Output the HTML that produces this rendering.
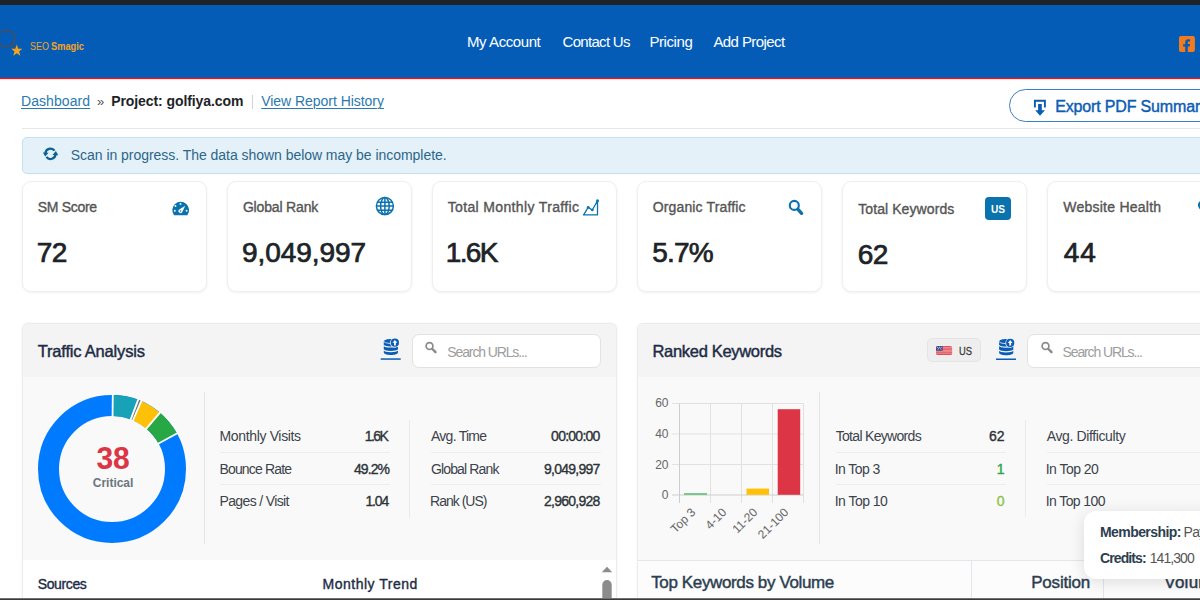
<!DOCTYPE html>
<html lang="en">
<head>
<meta charset="utf-8">
<title>SEOSmagic – Project: golfiya.com</title>
<style>
html,body{margin:0;padding:0;}
body{width:1200px;height:600px;overflow:hidden;position:relative;background:#fff;font-family:"Liberation Sans",sans-serif;}
.a{position:absolute;box-sizing:border-box;}
.t{position:absolute;white-space:pre;font-family:"Liberation Sans",sans-serif;}
svg{position:absolute;overflow:visible;}
.card{position:absolute;box-sizing:border-box;top:181px;width:185px;height:111px;background:#fff;border:1px solid #efefef;border-radius:9px;box-shadow:0 1px 3px rgba(0,0,0,.06);}
.panel{position:absolute;box-sizing:border-box;top:323px;height:300px;background:#f9f9f9;border:1px solid #ececec;border-radius:6px;overflow:hidden;box-shadow:0 0 3px rgba(0,0,0,.05);}
.phead{position:absolute;left:0;right:0;top:0;height:53px;background:#f4f4f4;}
.inp{position:absolute;box-sizing:border-box;height:34.5px;top:333.5px;background:#fff;border:1px solid #e2e2e2;border-radius:7px;}
.vd{position:absolute;width:1px;background:#e4e4e4;}
.hd{position:absolute;height:1px;background:#eeeeee;}
</style>
</head>
<body>
<!-- admin bar + header -->
<div class="a" style="left:0;top:0;width:1200px;height:5px;background:#1d2327;"></div>
<div class="a" style="left:0;top:5px;width:1200px;height:72px;background:#045cb7;"></div>
<div class="a" style="left:0;top:77px;width:1200px;height:1px;background:#3f4a94;"></div>
<div class="a" style="left:0;top:78px;width:1200px;height:1px;background:#ee1212;"></div>
<div class="a" style="left:0;top:79px;width:1200px;height:1px;background:#fde3e3;"></div>
<!-- logo -->
<svg width="40" height="40" style="left:-6px;top:26px;" viewBox="-6 26 40 40">
  <circle cx="6.4" cy="38.6" r="8.3" fill="none" stroke="#3f5068" stroke-width="1.7"/>
  <path d="M12.2 44.6 L15 47.6" stroke="#3f5068" stroke-width="2" stroke-linecap="round"/>
  <polygon fill="#f5a31f" transform="translate(16.8 50.5) scale(1.04 1.09) translate(-16.8 -50.6)" points="16.8,45.2 18.2,49.0 22.2,49.1 19.0,51.6 20.2,55.5 16.8,53.2 13.4,55.5 14.6,51.6 11.4,49.1 15.4,49.0"/>
</svg>
<!-- facebook -->
<svg width="16" height="17" style="left:1178.8px;top:35.7px;" viewBox="0 0 16 17">
  <rect x="0" y="0" width="15.9" height="16.1" rx="2" fill="#f27b20"/>
  <path transform="translate(-2.1,0.5)" d="M10.9 15.6V9.9h1.9l.35-2.3H10.9V6.2c0-.7.3-1.2 1.3-1.2h1V3c-.4-.06-1.1-.14-1.9-.14-1.9 0-3 1.1-3 3.1v1.7H6.2v2.3h2.1v5.7z" fill="#045cb7"/>
</svg>
<!-- breadcrumb separator bar -->
<div class="a" style="left:252px;top:95px;width:1px;height:14px;background:#d2d2d2;"></div>
<!-- export button -->
<div class="a" style="left:1008.5px;top:89.3px;width:260px;height:32.6px;border:1.3px solid #3f7cc4;border-radius:17px;background:#fff;"></div>
<svg width="14" height="18" style="left:1033px;top:99px;" viewBox="1033 99 14 18">
  <path d="M1034.9 107.5 V100.7 H1044.9 V107.5" fill="none" stroke="#0b5cb5" stroke-width="1.9"/>
  <path d="M1038.1 104 H1041.8 V110.2 H1045 L1040 115.8 L1035.2 110.2 H1038.1 Z" fill="#0b5cb5"/>
</svg>
<!-- hr -->
<div class="a" style="left:22px;top:128px;width:1178px;height:1px;background:#e7e7e7;"></div>
<!-- alert -->
<div class="a" style="left:22px;top:137px;width:1200px;height:36.5px;background:#e4f1f9;border:1px solid #c3e1f1;border-radius:5px;"></div>
<svg width="18" height="16" style="left:42px;top:146px;" viewBox="42 146 18 16">
  <path d="M54.6 150.7 A5.1 5.1 0 0 0 45.4 153.6" fill="none" stroke="#0a6290" stroke-width="2.2"/>
  <path d="M46.4 156.9 A5.1 5.1 0 0 0 55.6 154" fill="none" stroke="#0a6290" stroke-width="2.2"/>
  <path d="M42.9 152.4 L48.6 152.7 L45.2 156.6 Z" fill="#0a6290"/>
  <path d="M58.3 155.2 L52.5 154.9 L55.9 151 Z" fill="#0a6290"/>
</svg>
<!-- stat cards -->
<div class="card" style="left:21.5px;"></div>
<div class="card" style="left:226.5px;"></div>
<div class="card" style="left:431.5px;"></div>
<div class="card" style="left:636.5px;"></div>
<div class="card" style="left:841.5px;"></div>
<div class="card" style="left:1046.5px;"></div>
<!-- card icons -->
<svg width="18" height="15" style="left:172px;top:200.5px;" viewBox="172 200.5 18 15">
  <path d="M174 214.7 A8.4 8.4 0 1 1 187.4 214.7 Z" fill="#0a72ad"/>
  <circle cx="180.5" cy="203.4" r="0.95" fill="#fff"/><circle cx="175.5" cy="205.5" r="0.95" fill="#fff"/>
  <circle cx="174.8" cy="210.3" r="0.95" fill="#fff"/><circle cx="186.6" cy="210.3" r="0.95" fill="#fff"/>
  <path d="M185.2 205.3 L182.3 211.4 A2 2 0 1 1 179.3 208.9 Z" fill="#fff"/>
  <circle cx="180.6" cy="210.5" r="0.8" fill="#0a72ad"/>
</svg>
<svg width="20" height="20" style="left:375px;top:196px;" viewBox="375 196 20 20" fill="none" stroke="#0a72ad" stroke-width="1.5">
  <circle cx="384.9" cy="206.1" r="8.5"/>
  <ellipse cx="384.9" cy="206.1" rx="4.3" ry="8.5"/>
  <path d="M384.9 197.6 V214.6 M376.4 206.1 H393.4 M377.6 202.2 H392.2 M377.6 210.3 H392.2"/>
</svg>
<svg width="18" height="18" style="left:582px;top:198px;" viewBox="582 198 18 18">
  <path d="M583.6 214.9 L588.2 207.4 L592.3 210 L597.5 200.8 V214.9 Z" fill="none" stroke="#0a72ad" stroke-width="1.3" stroke-linejoin="round"/>
  <circle cx="588.2" cy="207.3" r="1.35" fill="#0a72ad"/><circle cx="592.3" cy="210" r="1.35" fill="#0a72ad"/><circle cx="597.5" cy="200.7" r="1.5" fill="#0a72ad"/>
</svg>
<svg width="18" height="18" style="left:787px;top:199px;" viewBox="787 199 18 18">
  <circle cx="794.3" cy="205.4" r="4.5" fill="none" stroke="#0a72ad" stroke-width="2.1"/>
  <path d="M798.2 209.6 L801.6 213.3" stroke="#0a72ad" stroke-width="3.4" stroke-linecap="round"/>
</svg>
<div class="a" style="left:985px;top:197.4px;width:26px;height:22.3px;background:#0a72ad;border-radius:4px;"></div>
<svg width="10" height="18" style="left:1196.8px;top:198px;" viewBox="1196 198 10 18">
  <path d="M1204 201 C1200 199.5 1196.6 202 1197 205.5 C1197.4 208.5 1201 211.5 1204 214" fill="#0a72ad"/>
</svg>

<!-- LEFT PANEL -->
<div class="panel" style="left:22px;width:595px;">
  <div class="phead"></div>
  <div class="a" style="left:0;right:0;top:236px;bottom:0;background:#fff;"></div>
</div>
<!-- db icon left -->
<svg width="22" height="24" style="left:380px;top:337px;" viewBox="380 337 22 24">
  <path d="M383.8 341.5 C383.8 338 398 338 398 341.5 V352.3 C398 356 383.8 356 383.8 352.3 Z" fill="#0b5cb5"/>
  <path d="M383.3 345.2 C386 347.6 395.5 347.6 398.5 345.2 M383.3 349.8 C386 352.2 395.5 352.2 398.5 349.8" fill="none" stroke="#f4f4f4" stroke-width="1.2"/>
  <path d="M383.8 341.6 C385.5 343.3 390 343.6 392 343.3" fill="none" stroke="#f4f4f4" stroke-width=".8"/>
  <circle cx="394.9" cy="342.7" r="4.9" fill="#f4f4f4"/>
  <circle cx="394.9" cy="342.7" r="4.1" fill="#0b5cb5"/>
  <path d="M394.9 339.9 L397.3 342.8 H395.8 V345.4 H394 V342.8 H392.5 Z" fill="#fff"/>
  <rect x="380.7" y="358.3" width="20" height="1.5" fill="#0b5cb5"/>
</svg>
<div class="inp" style="left:411.7px;width:189px;"></div>
<svg width="14" height="14" style="left:424.3px;top:341.3px;" viewBox="425 342 14 14">
  <circle cx="430.5" cy="347" r="3.4" fill="none" stroke="#8a8a8a" stroke-width="1.7"/>
  <path d="M433.4 350 L436.5 353.2" stroke="#8a8a8a" stroke-width="2.4" stroke-linecap="round"/>
</svg>
<!-- donut -->
<svg width="160" height="160" style="left:32px;top:388.6px;" viewBox="-80 -80 160 160">
  <g fill="none" stroke-width="21" transform="rotate(-90)">
    <circle r="63.5" stroke="#007bff"/>
    <circle r="63.5" stroke="#17a2b8" stroke-dasharray="22.8 1000"/>
    <circle r="63.5" stroke="#6c757d" stroke-dasharray="3.2 1000" stroke-dashoffset="-22.8"/>
    <circle r="63.5" stroke="#ffc107" stroke-dasharray="18.8 1000" stroke-dashoffset="-26"/>
    <circle r="63.5" stroke="#28a745" stroke-dasharray="23.2 1000" stroke-dashoffset="-44.8"/>
  </g>
  <g stroke="#fff" stroke-width="1.8">
    <line x1="0" y1="-52" x2="0" y2="-75" transform="rotate(0.6)"/>
    <line x1="0" y1="-52" x2="0" y2="-75" transform="rotate(20.7)"/>
    <line x1="0" y1="-52" x2="0" y2="-75" transform="rotate(23.3)"/>
    <line x1="0" y1="-52" x2="0" y2="-75" transform="rotate(40.4)"/>
    <line x1="0" y1="-52" x2="0" y2="-75" transform="rotate(61.3)"/>
  </g>
</svg>
<!-- left stats dividers -->
<div class="vd" style="left:204px;top:392px;height:151.5px;"></div>
<div class="vd" style="left:409px;top:420px;height:97.5px;background:#ebebeb;"></div>
<div class="hd" style="left:220px;width:170px;top:452px;"></div>
<div class="hd" style="left:220px;width:170px;top:484.3px;"></div>
<div class="hd" style="left:431px;width:170px;top:452px;"></div>
<div class="hd" style="left:431px;width:170px;top:484.3px;"></div>
<!-- scrollbar -->
<svg width="12" height="40" style="left:601px;top:565px;" viewBox="601 565 12 40">
  <path d="M601.8 572.2 L607 566.7 L612.2 572.2 Z" fill="#8c8c8c"/>
  <rect x="602.3" y="580" width="9.4" height="30" rx="4.7" fill="#8c8c8c"/>
</svg>

<!-- RIGHT PANEL -->
<div class="panel" style="left:637px;width:600px;">
  <div class="phead"></div>
  <div class="a" style="left:0;right:0;top:236px;bottom:0;background:#fcfcfc;border-top:1px solid #e3e6ea;"></div>
  <div class="a" style="left:332.5px;top:237px;width:1px;bottom:0;background:#e3e6ea;"></div>
  <div class="a" style="left:465px;top:237px;width:1px;bottom:0;background:#e3e6ea;"></div>
</div>
<!-- US chip -->
<div class="a" style="left:927px;top:338.2px;width:54px;height:24px;background:#eeeeee;border:1px solid #e4e4e4;border-radius:5px;"></div>
<svg width="17" height="10" style="left:936px;top:345.7px;" viewBox="0 0 17 10">
  <rect x="0" y="0" width="16.1" height="9.1" rx="1.7" fill="#e0525b"/>
  <g fill="#f0a3a8"><rect x="6.6" y="1.2" width="9.5" height=".7"/><rect x="6.6" y="2.6" width="9.5" height=".7"/><rect x="6.6" y="4" width="9.5" height=".7"/><rect x="0" y="5.4" width="16.1" height=".7"/><rect x="0" y="6.8" width="16.1" height=".7"/></g>
  <path d="M1.7 0 H6.6 V4.8 H0 V1.7 A1.7 1.7 0 0 1 1.7 0 Z" fill="#3f4f8f"/>
  <g fill="#e8ebf5"><circle cx="1.6" cy="1.3" r=".5"/><circle cx="3.4" cy="1.3" r=".5"/><circle cx="5.2" cy="1.3" r=".5"/><circle cx="2.5" cy="2.8" r=".5"/><circle cx="4.3" cy="2.8" r=".5"/><circle cx="1.6" cy="3.9" r=".4"/><circle cx="5.2" cy="3.9" r=".4"/></g>
</svg>
<!-- db icon right -->
<svg width="22" height="24" style="left:995px;top:337px;" viewBox="380 337 22 24">
  <g transform="translate(0.3,0.2)">
  <path d="M383.8 341.5 C383.8 338 398 338 398 341.5 V352.3 C398 356 383.8 356 383.8 352.3 Z" fill="#0b5cb5"/>
  <path d="M383.3 345.2 C386 347.6 395.5 347.6 398.5 345.2 M383.3 349.8 C386 352.2 395.5 352.2 398.5 349.8" fill="none" stroke="#f4f4f4" stroke-width="1.2"/>
  <path d="M383.8 341.6 C385.5 343.3 390 343.6 392 343.3" fill="none" stroke="#f4f4f4" stroke-width=".8"/>
  <circle cx="394.9" cy="342.7" r="4.9" fill="#f4f4f4"/>
  <circle cx="394.9" cy="342.7" r="4.1" fill="#0b5cb5"/>
  <path d="M394.9 339.9 L397.3 342.8 H395.8 V345.4 H394 V342.8 H392.5 Z" fill="#fff"/>
  <rect x="380.7" y="358.3" width="20" height="1.5" fill="#0b5cb5"/>
  </g>
</svg>
<div class="inp" style="left:1027px;width:189px;"></div>
<svg width="14" height="14" style="left:1039.5px;top:341.3px;" viewBox="425 342 14 14">
  <circle cx="430.5" cy="347" r="3.4" fill="none" stroke="#8a8a8a" stroke-width="1.7"/>
  <path d="M433.4 350 L436.5 353.2" stroke="#8a8a8a" stroke-width="2.4" stroke-linecap="round"/>
</svg>
<!-- bar chart -->
<svg width="180" height="170" style="left:645px;top:390px;" viewBox="645 390 180 170">
  <g stroke="#e1e1e1" stroke-width="1" fill="none">
    <path d="M672 403.5 H803.5 M672 434 H803.5 M672 464.5 H803.5"/>
    <path d="M710.5 403.5 V503 M741.5 403.5 V503 M772.5 403.5 V503 M803.5 403.5 V503"/>
  </g>
  <g stroke="#cdcdcd" stroke-width="1" fill="none">
    <path d="M672 495 H803.5 M679.5 403.5 V503"/>
  </g>
  <rect x="684" y="493.2" width="23" height="1.6" fill="#5cbf75"/>
  <rect x="746.5" y="488.6" width="22.5" height="6.2" fill="#ffc107"/>
  <rect x="777.7" y="409.2" width="22.5" height="85.6" fill="#dc3545"/>
  <g font-family="Liberation Sans, sans-serif" font-size="12" fill="#666" text-anchor="end">
    <text transform="translate(696.3,513) rotate(-45)">Top 3</text>
    <text transform="translate(727.3,513) rotate(-45)">4-10</text>
    <text transform="translate(758.3,513) rotate(-45)">11-20</text>
    <text transform="translate(789.3,513) rotate(-45)">21-100</text>
  </g>
</svg>
<!-- right stats dividers -->
<div class="vd" style="left:819px;top:392px;height:151.5px;"></div>
<div class="vd" style="left:1025px;top:420px;height:97px;background:#ebebeb;"></div>
<div class="hd" style="left:835.5px;width:170px;top:452px;"></div>
<div class="hd" style="left:835.5px;width:170px;top:484.3px;"></div>
<div class="hd" style="left:1046.5px;width:170px;top:452px;"></div>
<div class="hd" style="left:1046.5px;width:170px;top:484.3px;"></div>
<!-- tooltip -->
<div class="a" style="left:1084.2px;top:510.8px;width:200px;height:68.4px;background:#fff;border-radius:12px;box-shadow:0 3px 16px rgba(0,0,0,.13);z-index:5;"></div>

<span class="t" style="font-size:11px;line-height:11px;font-weight:400;color:#f5a31f;top:40.69px;left:30.20px;transform:scaleX(0.8110);transform-origin:0 0;">SEO</span>
<span class="t" style="font-size:11px;line-height:11px;font-weight:700;color:#f5a31f;top:40.69px;left:51.20px;transform:scaleX(0.8408);transform-origin:0 0;">Smagic</span>
<span class="t" style="font-size:15px;line-height:15px;font-weight:400;color:#fff;top:34.30px;left:467.00px;letter-spacing:-0.422px;">My Account</span>
<span class="t" style="font-size:15px;line-height:15px;font-weight:400;color:#fff;top:34.30px;left:562.50px;letter-spacing:-0.688px;">Contact Us</span>
<span class="t" style="font-size:15px;line-height:15px;font-weight:400;color:#fff;top:34.30px;left:649.40px;letter-spacing:-0.418px;">Pricing</span>
<span class="t" style="font-size:15px;line-height:15px;font-weight:400;color:#fff;top:34.30px;left:713.40px;letter-spacing:-0.577px;">Add Project</span>
<span class="t" style="font-size:14px;line-height:14px;font-weight:400;color:#2a7ab0;top:94.35px;left:21.00px;letter-spacing:0.075px;text-decoration:underline;text-underline-offset:2px;text-decoration-thickness:1px;">Dashboard</span>
<span class="t" style="font-size:13px;line-height:13px;font-weight:400;color:#555;top:95.20px;left:97.00px;letter-spacing:0.000px;">»</span>
<span class="t" style="font-size:14px;line-height:14px;font-weight:700;color:#1d2327;top:94.35px;left:111.20px;letter-spacing:-0.082px;">Project: golfiya.com</span>
<span class="t" style="font-size:14px;line-height:14px;font-weight:400;color:#2a7ab0;top:94.35px;left:261.20px;letter-spacing:-0.036px;text-decoration:underline;text-underline-offset:2px;text-decoration-thickness:1px;">View Report History</span>
<span class="t" style="font-size:16px;line-height:16px;font-weight:400;color:#0b5cb5;top:98.66px;-webkit-text-stroke:0.42px #0b5cb5;left:1055.21px;letter-spacing:-0.16px;">Export PDF Summary</span>
<span class="t" style="font-size:14px;line-height:14px;font-weight:400;color:#2c6688;top:148.15px;left:70.80px;letter-spacing:-0.038px;">Scan in progress. The data shown below may be incomplete.</span>
<span class="t" style="font-size:14px;line-height:14px;font-weight:400;color:#555;top:200.35px;-webkit-text-stroke:0.36px #555;left:37.68px;letter-spacing:-0.291px;">SM Score</span>
<span class="t" style="font-size:14px;line-height:14px;font-weight:400;color:#555;top:200.35px;-webkit-text-stroke:0.36px #555;left:242.88px;letter-spacing:-0.161px;">Global Rank</span>
<span class="t" style="font-size:14px;line-height:14px;font-weight:400;color:#555;top:200.35px;-webkit-text-stroke:0.36px #555;left:447.68px;letter-spacing:0.357px;">Total Monthly Traffic</span>
<span class="t" style="font-size:14px;line-height:14px;font-weight:400;color:#555;top:200.35px;-webkit-text-stroke:0.36px #555;left:652.68px;letter-spacing:0.151px;">Organic Traffic</span>
<span class="t" style="font-size:14px;line-height:14px;font-weight:400;color:#555;top:201.85px;-webkit-text-stroke:0.36px #555;left:858.18px;letter-spacing:0.093px;">Total Keywords</span>
<span class="t" style="font-size:14px;line-height:14px;font-weight:400;color:#555;top:200.35px;-webkit-text-stroke:0.36px #555;left:1063.18px;letter-spacing:0.250px;">Website Health</span>
<span class="t" style="font-size:28px;line-height:28px;font-weight:400;color:#1d2327;top:239.00px;-webkit-text-stroke:0.73px #1d2327;left:36.86px;letter-spacing:-0.800px;">72</span>
<span class="t" style="font-size:28px;line-height:28px;font-weight:400;color:#1d2327;top:239.00px;-webkit-text-stroke:0.73px #1d2327;left:242.06px;letter-spacing:-0.053px;">9,049,997</span>
<span class="t" style="font-size:28px;line-height:28px;font-weight:400;color:#1d2327;top:239.00px;-webkit-text-stroke:0.73px #1d2327;left:445.86px;letter-spacing:-1.717px;">1.6K</span>
<span class="t" style="font-size:28px;line-height:28px;font-weight:400;color:#1d2327;top:239.00px;-webkit-text-stroke:0.73px #1d2327;left:652.36px;letter-spacing:-0.884px;">5.7%</span>
<span class="t" style="font-size:28px;line-height:28px;font-weight:400;color:#1d2327;top:241.00px;-webkit-text-stroke:0.73px #1d2327;left:857.66px;letter-spacing:-0.400px;">62</span>
<span class="t" style="font-size:28px;line-height:28px;font-weight:400;color:#1d2327;top:239.00px;-webkit-text-stroke:0.73px #1d2327;left:1063.86px;letter-spacing:0.700px;">44</span>
<span class="t" style="font-size:10.5px;line-height:10.5px;font-weight:700;color:#fff;top:203.51px;left:990.90px;transform:scaleX(0.9669);transform-origin:0 0;">US</span>
<span class="t" style="font-size:16.5px;line-height:16.5px;font-weight:400;color:#1d2b45;top:343.33px;-webkit-text-stroke:0.43px #1d2b45;left:37.71px;letter-spacing:-0.188px;">Traffic Analysis</span>
<span class="t" style="font-size:16.5px;line-height:16.5px;font-weight:400;color:#1d2b45;top:343.33px;-webkit-text-stroke:0.43px #1d2b45;left:652.51px;letter-spacing:-0.313px;">Ranked Keywords</span>
<span class="t" style="font-size:14px;line-height:14px;font-weight:400;color:#9d9d9d;top:345.15px;left:447.30px;letter-spacing:-1.118px;">Search URLs...</span>
<span class="t" style="font-size:14px;line-height:14px;font-weight:400;color:#9d9d9d;top:345.15px;left:1062.50px;letter-spacing:-1.118px;">Search URLs...</span>
<span class="t" style="font-size:10.5px;line-height:10.5px;font-weight:400;color:#3a3a3a;top:345.71px;-webkit-text-stroke:0.27px #3a3a3a;left:958.92px;transform:scaleX(0.8885);transform-origin:0 0;">US</span>
<span class="t" style="font-size:30px;line-height:30px;font-weight:700;color:#dc3545;top:443.61px;left:96.60px;letter-spacing:-0.285px;transform:scaleY(1.06);transform-origin:0 25.4px;">38</span>
<span class="t" style="font-size:12px;line-height:12px;font-weight:700;color:#6c757d;top:476.84px;left:92.80px;letter-spacing:-0.021px;">Critical</span>
<span class="t" style="font-size:14px;line-height:14px;font-weight:400;color:#3c434a;top:429.35px;left:219.50px;letter-spacing:-0.347px;">Monthly Visits</span>
<span class="t" style="font-size:14px;line-height:14px;font-weight:400;color:#2c3338;top:429.35px;-webkit-text-stroke:0.36px #2c3338;left:364.78px;letter-spacing:-1.575px;">1.6K</span>
<span class="t" style="font-size:14px;line-height:14px;font-weight:400;color:#3c434a;top:429.35px;left:431.00px;letter-spacing:-0.744px;">Avg. Time</span>
<span class="t" style="font-size:14px;line-height:14px;font-weight:400;color:#2c3338;top:429.35px;-webkit-text-stroke:0.36px #2c3338;left:551.08px;letter-spacing:-0.739px;">00:00:00</span>
<span class="t" style="font-size:14px;line-height:14px;font-weight:400;color:#3c434a;top:462.15px;left:219.50px;letter-spacing:-0.846px;">Bounce Rate</span>
<span class="t" style="font-size:14px;line-height:14px;font-weight:400;color:#2c3338;top:462.15px;-webkit-text-stroke:0.36px #2c3338;left:353.98px;letter-spacing:-0.928px;">49.2%</span>
<span class="t" style="font-size:14px;line-height:14px;font-weight:400;color:#3c434a;top:462.15px;left:431.00px;letter-spacing:-0.864px;">Global Rank</span>
<span class="t" style="font-size:14px;line-height:14px;font-weight:400;color:#2c3338;top:462.15px;-webkit-text-stroke:0.36px #2c3338;left:543.98px;letter-spacing:-0.733px;">9,049,997</span>
<span class="t" style="font-size:14px;line-height:14px;font-weight:400;color:#3c434a;top:494.45px;left:219.50px;letter-spacing:-0.631px;">Pages / Visit</span>
<span class="t" style="font-size:14px;line-height:14px;font-weight:400;color:#2c3338;top:494.45px;-webkit-text-stroke:0.36px #2c3338;left:365.48px;letter-spacing:-1.142px;">1.04</span>
<span class="t" style="font-size:14px;line-height:14px;font-weight:400;color:#3c434a;top:494.45px;left:430.00px;letter-spacing:-0.985px;">Rank (US)</span>
<span class="t" style="font-size:14px;line-height:14px;font-weight:400;color:#2c3338;top:494.45px;-webkit-text-stroke:0.36px #2c3338;left:543.98px;letter-spacing:-0.733px;">2,960,928</span>
<span class="t" style="font-size:14px;line-height:14px;font-weight:400;color:#1d2b45;top:576.65px;-webkit-text-stroke:0.36px #1d2b45;left:37.68px;letter-spacing:-0.370px;">Sources</span>
<span class="t" style="font-size:14px;line-height:14px;font-weight:400;color:#1d2b45;top:576.65px;-webkit-text-stroke:0.36px #1d2b45;left:322.48px;letter-spacing:0.513px;">Monthly Trend</span>
<span class="t" style="font-size:14px;line-height:14px;font-weight:400;color:#3c434a;top:429.15px;left:835.70px;letter-spacing:-0.687px;">Total Keywords</span>
<span class="t" style="font-size:14px;line-height:14px;font-weight:400;color:#2c3338;top:429.15px;-webkit-text-stroke:0.36px #2c3338;left:989.03px;">62</span>
<span class="t" style="font-size:14px;line-height:14px;font-weight:400;color:#3c434a;top:429.15px;left:1046.70px;letter-spacing:-0.378px;">Avg. Difficulty</span>
<span class="t" style="font-size:14px;line-height:14px;font-weight:400;color:#3c434a;top:462.15px;left:834.70px;letter-spacing:-0.575px;">In Top 3</span>
<span class="t" style="font-size:14px;line-height:14px;font-weight:400;color:#28a745;top:462.15px;-webkit-text-stroke:0.36px #28a745;left:996.82px;">1</span>
<span class="t" style="font-size:14px;line-height:14px;font-weight:400;color:#3c434a;top:462.15px;left:1045.70px;letter-spacing:-0.527px;">In Top 20</span>
<span class="t" style="font-size:14px;line-height:14px;font-weight:400;color:#3c434a;top:494.15px;left:834.70px;letter-spacing:-0.527px;">In Top 10</span>
<span class="t" style="font-size:14px;line-height:14px;font-weight:400;color:#8bc34a;top:494.15px;-webkit-text-stroke:0.36px #8bc34a;left:996.82px;">0</span>
<span class="t" style="font-size:14px;line-height:14px;font-weight:400;color:#3c434a;top:494.15px;left:1045.70px;letter-spacing:-0.589px;">In Top 100</span>
<span class="t" style="font-size:17px;line-height:17px;font-weight:400;color:#2c3e50;top:573.61px;-webkit-text-stroke:0.44px #2c3e50;left:651.22px;letter-spacing:-0.374px;">Top Keywords by Volume</span>
<span class="t" style="font-size:17px;line-height:17px;font-weight:400;color:#2c3e50;top:573.61px;-webkit-text-stroke:0.44px #2c3e50;left:1031.22px;letter-spacing:-0.210px;">Position</span>
<span class="t" style="font-size:17px;line-height:17px;font-weight:400;color:#2c3e50;top:573.61px;-webkit-text-stroke:0.44px #2c3e50;left:1164.22px;letter-spacing:0.262px;">Volume</span>
<span class="t" style="font-size:14px;line-height:14px;font-weight:700;color:#2c3e50;top:525.45px;left:1100.00px;letter-spacing:-0.576px;z-index:6;">Membership:</span>
<span class="t" style="font-size:14px;line-height:14px;font-weight:400;color:#555;top:525.45px;left:1183.60px;letter-spacing:-0.7px;z-index:6;">Pay as you go</span>
<span class="t" style="font-size:14px;line-height:14px;font-weight:700;color:#2c3e50;top:551.45px;left:1100.00px;letter-spacing:-0.891px;z-index:6;">Credits:</span>
<span class="t" style="font-size:14px;line-height:14px;font-weight:400;color:#555;top:551.45px;left:1149.70px;letter-spacing:-0.920px;z-index:6;">141,300</span>
<span class="t" style="font-size:12px;line-height:12px;font-weight:400;color:#666;top:397.24px;left:655.13px;">60</span>
<span class="t" style="font-size:12px;line-height:12px;font-weight:400;color:#666;top:427.84px;left:655.13px;">40</span>
<span class="t" style="font-size:12px;line-height:12px;font-weight:400;color:#666;top:458.54px;left:655.13px;">20</span>
<span class="t" style="font-size:12px;line-height:12px;font-weight:400;color:#666;top:488.84px;left:661.80px;">0</span>

<!-- bottom edge -->
<div class="a" style="left:0;top:598px;width:1200px;height:1px;background:#707070;"></div>
<div class="a" style="left:0;top:599px;width:1200px;height:1px;background:#3a3a3a;"></div>
</body>
</html>
